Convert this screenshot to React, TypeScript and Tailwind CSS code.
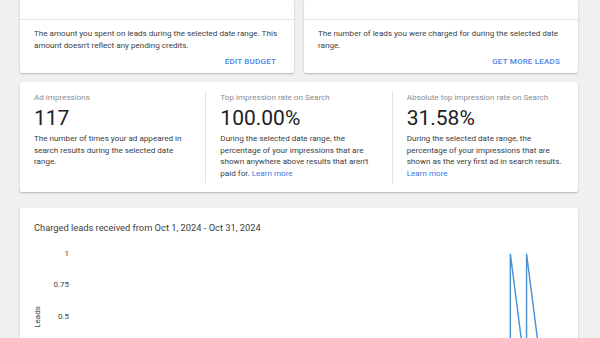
import React from 'react';

const font = { fontFamily: 'Roboto, "Liberation Sans", sans-serif' };

const SummaryCard = ({ text, action }: { text: string; action: string }) => (
  <div className="bg-white rounded-[2px] shadow-[0_1px_2px_rgba(0,0,0,0.25)]">
    <div className="h-[20px] border-b border-[#e3e3e3]" />
    <div className="px-[14px] pt-[8px]">
      <p className="text-[8.1px] leading-[11.7px] text-[#3c4043]">{text}</p>
    </div>
    <div className="flex justify-end pr-[18px] pt-[5px] pb-[5px]">
      <button className="text-[8px] leading-[11.6px] font-medium uppercase tracking-[0.2px] text-[#4a84e8]">
        {action}
      </button>
    </div>
  </div>
);

type Metric = { label: string; value: string; desc: string; link?: boolean };

const metrics: Metric[] = [
  {
    label: 'Ad impressions',
    value: '117',
    desc: 'The number of times your ad appeared in search results during the selected date range.',
  },
  {
    label: 'Top impression rate on Search',
    value: '100.00%',
    desc: "During the selected date range, the percentage of your impressions that are shown anywhere above results that aren't paid for.",
    link: true,
  },
  {
    label: 'Absolute top impression rate on Search',
    value: '31.58%',
    desc: 'During the selected date range, the percentage of your impressions that are shown as the very first ad in search results.',
    link: true,
  },
];

// y position of a value inside the plot svg (rows are 31.6px tall)
const yOf = (v: number) => 15.8 + (1 - v) * 126.4;

export default function App() {
  const points = [
    [436, 0],
    [436, 1],
    [452, 0],
    [452, 1],
    [468, 0],
  ]
    .map(([x, v]) => `${x},${yOf(v)}`)
    .join(' ');

  return (
    <div className="min-h-screen bg-[#f0f0f0] pb-10" style={font}>
      <div className="ml-[20px] w-[558px]">
        {/* Spend / leads cards */}
        <div className="grid grid-cols-2 gap-[10px]">
          <SummaryCard
            text="The amount you spent on leads during the selected date range. This amount doesn't reflect any pending credits."
            action="Edit budget"
          />
          <SummaryCard
            text="The number of leads you were charged for during the selected date range."
            action="Get more leads"
          />
        </div>

        {/* Impression metrics */}
        <div className="mt-[9px] bg-white rounded-[2px] shadow-[0_1px_2px_rgba(0,0,0,0.25)] py-[9px] flex">
          {metrics.map((m, i) => (
            <div
              key={m.label}
              className={`flex-1 px-[14px] pb-[3px] ${i > 0 ? 'border-l border-[#e3e3e3]' : ''}`}
            >
              <div className="text-[8.1px] leading-[12px] text-[#8a8d91]">{m.label}</div>
              <div className="text-[21px] leading-[30px] text-[#202124]">{m.value}</div>
              <p className="text-[8.1px] leading-[11.7px] text-[#3c4043]">
                {m.desc}
                {m.link && (
                  <>
                    {' '}
                    <a className="text-[#3b78e7]">Learn more</a>
                  </>
                )}
              </p>
            </div>
          ))}
        </div>

        {/* Chart */}
        <div className="mt-[16px] bg-white rounded-[2px] shadow-[0_1px_2px_rgba(0,0,0,0.25)] px-[14px] pt-[13.5px] pb-6">
          <h3 className="text-[9.3px] leading-[13px] text-[#3c4043]">
            Charged leads received from Oct 1, 2024 - Oct 31, 2024
          </h3>
          <div className="mt-[3.5px] flex">
            <div className="w-[8px] flex items-center justify-center">
              <span className="-rotate-90 whitespace-nowrap text-[8px] text-[#3c4043]">Leads</span>
            </div>
            <div className="w-[27px] flex flex-col">
              {['1', '0.75', '0.5', '0.25', '0'].map((t) => (
                <div key={t} className="h-[31.6px] flex items-center justify-end text-[8px] text-[#444]">
                  {t}
                </div>
              ))}
            </div>
            <svg className="flex-1 h-[158px]" viewBox="0 0 489 158" preserveAspectRatio="none">
              <polyline points={points} fill="none" stroke="#4a90d2" strokeWidth="1.4" />
            </svg>
          </div>
        </div>
      </div>
    </div>
  );
}
